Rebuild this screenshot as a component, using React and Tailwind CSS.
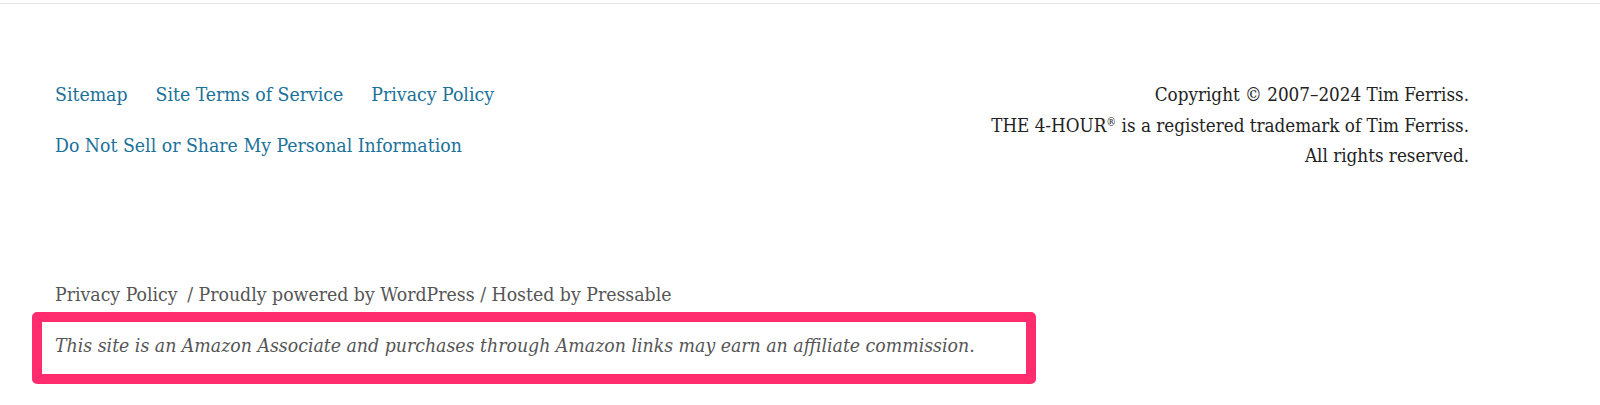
import React from 'react';

const serif = "font-['DejaVu_Serif_Condensed','DejaVu_Serif',serif]";

const links = ['Sitemap', 'Site Terms of Service', 'Privacy Policy', 'Do Not Sell or Share My Personal Information'];

const App = () => {
  return (
    <div className={`min-h-[405px] bg-white ${serif} text-[19.3px] leading-[30px]`}>
      <div className="h-[3px]" />
      <footer className="border-t border-[#e6e6e6]">
        {/* Footer menu + copyright */}
        <div className="flex justify-between pl-[55px] pr-[131px] pt-[76px]">
          <ul className="flex flex-wrap max-w-[520px] gap-x-[28px] gap-y-[11px]">
            {links.map(l => (
              <li key={l}>
                <a href="#" className="text-[#1b7199]">{l}</a>
              </li>
            ))}
          </ul>
          <div className="text-right text-[#222] text-[18.7px] leading-[30.5px]">
            <p>Copyright © 2007–2024 Tim Ferriss.</p>
            <p>THE 4-HOUR<sup className="text-[11px] top-[-6px]">®</sup> is a registered trademark of Tim Ferriss.</p>
            <p>All rights reserved.</p>
          </div>
        </div>

        {/* Site info */}
        <div className="pl-[55px] pt-[108px] text-[#555]">
          <p>
            <a href="#">Privacy Policy</a> <span className="ml-[4px]">/ </span>
            <a href="#">Proudly powered by WordPress</a> / <a href="#">Hosted by Pressable</a>
          </p>
        </div>
        <div className="ml-[32px] mt-[2px] w-[1004px] h-[72px] border-[10px] border-[#ff2d6d] rounded-[5px] pl-[13px] pt-[9px]">
          <p className="italic text-[#555]">
            This site is an Amazon Associate and purchases through Amazon links may earn an affiliate commission.
          </p>
        </div>
      </footer>
    </div>
  );
};

export default App;
